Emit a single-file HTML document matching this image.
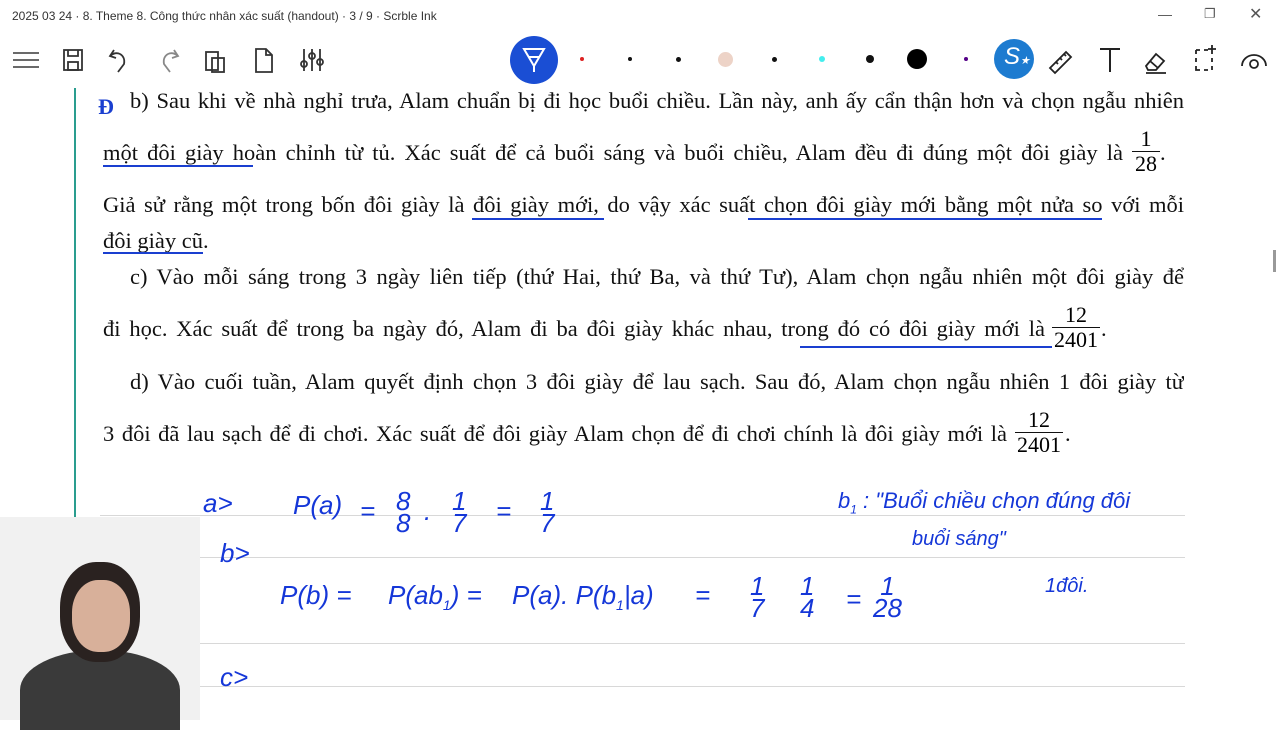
<!DOCTYPE html>
<html><head><meta charset="utf-8"><style>
body{margin:0;width:1280px;height:720px;overflow:hidden;background:#fff;position:relative;font-family:"Liberation Sans",sans-serif}
.t{position:absolute;font-family:"Liberation Serif",serif;font-size:22.5px;color:#111;white-space:nowrap}
.j{text-align:justify;text-align-last:justify;white-space:normal;height:28px;overflow:hidden}
.fr{position:absolute;font-family:"Liberation Serif",serif;font-size:22px;text-align:center;line-height:24px}
.fr span{display:block}
.fr .n{border-bottom:1px solid #111}
.u{position:absolute;height:2px;background:#1a3fd0}
.h{position:absolute;font-family:"Liberation Sans",sans-serif;color:#1537d8;font-size:26px;font-style:italic;white-space:nowrap}
.hf{display:inline-block;text-align:center;line-height:22px;vertical-align:middle}
.rl{position:absolute;left:100px;width:1085px;height:1px;background:#d8d8d8}
.ic{position:absolute;top:44px}
.dot{position:absolute;border-radius:50%}
</style></head><body>
<div style="position:absolute;left:12px;top:9px;font-size:12px;color:#333">2025 03 24 · 8. Theme 8. Công thức nhân xác suất (handout) · 3 / 9 · Scrble Ink</div>
<div style="position:absolute;left:1158px;top:6px;font-size:14px;color:#555">—</div>
<div style="position:absolute;left:1204px;top:6px;font-size:13px;color:#555">❐</div>
<div style="position:absolute;left:1249px;top:4px;font-size:16px;color:#555">✕</div>
<svg class="ic" style="left:10px" width="330" height="32" fill="none" stroke="#333" stroke-width="1.8">
<path d="M3 9h26M3 16h26M3 23h26" stroke="#555"/>
<rect x="54" y="6" width="18" height="20"/><rect x="58" y="18" width="10" height="8"/><path d="M58 6v6h10V6"/>
<path d="M104 6l-4 6 6 2M100 12c6-6 16-2 14 8l-6 8"/>
<path d="M164 6l4 6-6 2M168 12c-6-6-16-2-14 8l6 8" stroke="#888"/>
<rect x="196" y="8" width="12" height="18"/><rect x="202" y="14" width="12" height="14"/>
<path d="M246 5h10l6 6v17h-16z M256 5v6h6"/>
<path d="M294 5v22M302 5v22M310 5v22"/><circle cx="294" cy="20" r="3"/><circle cx="302" cy="12" r="3"/><circle cx="310" cy="18" r="3"/>
</svg>
<div class="dot" style="left:510px;top:36px;width:48px;height:48px;background:#1a4ed4"></div>
<svg style="position:absolute;left:522px;top:46px" width="24" height="28" fill="none" stroke="#fff" stroke-width="2"><path d="M2 3h20L12 20zM7 11h10M12 20v6"/></svg>
<div class="dot" style="left:580px;top:57px;width:4px;height:4px;background:#d22"></div>
<div class="dot" style="left:628px;top:57px;width:4px;height:4px;background:#111"></div>
<div class="dot" style="left:676px;top:57px;width:5px;height:5px;background:#111"></div>
<div class="dot" style="left:718px;top:52px;width:15px;height:15px;background:#edd3c7"></div>
<div class="dot" style="left:772px;top:57px;width:5px;height:5px;background:#111"></div>
<div class="dot" style="left:819px;top:56px;width:6px;height:6px;background:#4ee"></div>
<div class="dot" style="left:866px;top:55px;width:8px;height:8px;background:#111"></div>
<div class="dot" style="left:907px;top:49px;width:20px;height:20px;background:#000"></div>
<div class="dot" style="left:964px;top:57px;width:4px;height:4px;background:#508"></div>
<div class="dot" style="left:994px;top:39px;width:40px;height:40px;background:#1d7bd0"></div>
<div style="position:absolute;left:1004px;top:43px;color:#fff;font-size:24px;font-style:italic">S<span style="font-size:11px">★</span></div>
<svg class="ic" style="left:1046px" width="230" height="32" fill="none" stroke="#222" stroke-width="1.8">
<path d="M4 24L20 8l5 5L9 29z M10 18l2 2M14 14l2 2M18 10l2 2"/>
<path d="M54 5h20M64 5v23" stroke-width="2"/>
<path d="M100 22l10-12 8 7-8 9h-8z M104 17l8 7M100 29h20"/>
<path d="M150 6h4M158 6h4M150 6v4M150 14v4M150 22v4h4M158 26h4M166 26v-4M166 18v-4M166 6v4M166 1v8M162 5h8"/>
<path d="M196 22a12 11 0 0 1 24 0"/><circle cx="208" cy="20" r="4"/>
</svg>
<div style="position:absolute;left:74px;top:88px;width:2px;height:632px;background:#2a9d8f"></div>
<div style="position:absolute;left:1273px;top:250px;width:3px;height:22px;background:#999"></div>

<div class="t" style="left:98px;top:94px;color:#1a3fd0;font-weight:bold;font-size:22px">Ð</div>
<div class="t j" style="left:130px;top:88px;width:1054px">b) Sau khi về nhà nghỉ trưa, Alam chuẩn bị đi học buổi chiều. Lần này, anh ấy cẩn thận hơn và chọn ngẫu nhiên</div>
<div class="t j" style="left:103px;top:140px;width:1020px">một đôi giày hoàn chỉnh từ tủ. Xác suất để cả buổi sáng và buổi chiều, Alam đều đi đúng một đôi giày là</div>
<div class="fr" style="left:1132px;top:127px;width:28px"><span class="n">1</span><span>28</span></div><div class="t" style="left:1160px;top:140px">.</div>
<div class="t j" style="left:103px;top:192px;width:1081px">Giả sử rằng một trong bốn đôi giày là đôi giày mới, do vậy xác suất chọn đôi giày mới bằng một nửa so với mỗi</div>
<div class="t" style="left:103px;top:228px">đôi giày cũ.</div>
<div class="t j" style="left:130px;top:264px;width:1054px">c) Vào mỗi sáng trong 3 ngày liên tiếp (thứ Hai, thứ Ba, và thứ Tư), Alam chọn ngẫu nhiên một đôi giày để</div>
<div class="t j" style="left:103px;top:316px;width:942px">đi học. Xác suất để trong ba ngày đó, Alam đi ba đôi giày khác nhau, trong đó có đôi giày mới là</div>
<div class="fr" style="left:1052px;top:303px;width:48px"><span class="n">12</span><span>2401</span></div><div class="t" style="left:1101px;top:316px">.</div>
<div class="t j" style="left:130px;top:369px;width:1054px">d) Vào cuối tuần, Alam quyết định chọn 3 đôi giày để lau sạch. Sau đó, Alam chọn ngẫu nhiên 1 đôi giày từ</div>
<div class="t j" style="left:103px;top:421px;width:904px">3 đôi đã lau sạch để đi chơi. Xác suất để đôi giày Alam chọn để đi chơi chính là đôi giày mới là</div>
<div class="fr" style="left:1015px;top:408px;width:48px"><span class="n">12</span><span>2401</span></div><div class="t" style="left:1065px;top:421px">.</div>

<div class="u" style="left:103px;top:165px;width:150px"></div>
<div class="u" style="left:472px;top:218px;width:132px"></div>
<div class="u" style="left:748px;top:218px;width:354px"></div>
<div class="u" style="left:103px;top:252px;width:100px"></div>
<div class="u" style="left:800px;top:346px;width:252px"></div>

<div class="rl" style="top:515px"></div><div class="rl" style="top:557px"></div><div class="rl" style="top:643px"></div><div class="rl" style="top:686px"></div>

<div class="h" style="left:203px;top:488px">a&gt;</div>
<div class="h" style="left:293px;top:490px">P(a)</div>
<div class="h" style="left:360px;top:496px">=</div>
<div class="h" style="left:396px;top:490px"><span class="hf">8<br>8</span></div>
<div class="h" style="left:424px;top:496px">.</div>
<div class="h" style="left:452px;top:490px"><span class="hf">1<br>7</span></div>
<div class="h" style="left:496px;top:496px">=</div>
<div class="h" style="left:540px;top:490px"><span class="hf">1<br>7</span></div>
<div class="h" style="left:220px;top:538px">b&gt;</div>
<div class="h" style="left:280px;top:580px">P(b) =</div>
<div class="h" style="left:388px;top:580px">P(ab<sub style="font-size:14px">1</sub>) =</div>
<div class="h" style="left:512px;top:580px">P(a). P(b<sub style="font-size:14px">1</sub>|a)</div>
<div class="h" style="left:695px;top:580px">=</div>
<div class="h" style="left:750px;top:575px"><span class="hf">1<br>7</span></div>
<div class="h" style="left:800px;top:575px"><span class="hf">1<br>4</span></div>
<div class="h" style="left:846px;top:584px">=</div>
<div class="h" style="left:873px;top:575px"><span class="hf">1<br>28</span></div>
<div class="h" style="left:220px;top:662px">c&gt;</div>
<div class="h" style="left:838px;top:488px;font-size:22px">b<sub style="font-size:12px">1</sub> : "Buổi chiều chọn đúng đôi</div>
<div class="h" style="left:912px;top:528px;font-size:20px">buổi sáng"</div>
<div class="h" style="left:1045px;top:575px;font-size:20px">1đôi.</div>

<div style="position:absolute;left:0;top:517px;width:200px;height:203px;background:#f1f1f1"></div>
<div style="position:absolute;left:20px;top:650px;width:160px;height:80px;border-radius:50% 50% 0 0;background:#3a3a3a"></div>
<div style="position:absolute;left:60px;top:562px;width:80px;height:100px;border-radius:45%;background:#2a2220"></div>
<div style="position:absolute;left:72px;top:580px;width:58px;height:72px;border-radius:45%;background:#d8b09a"></div>
</body></html>
